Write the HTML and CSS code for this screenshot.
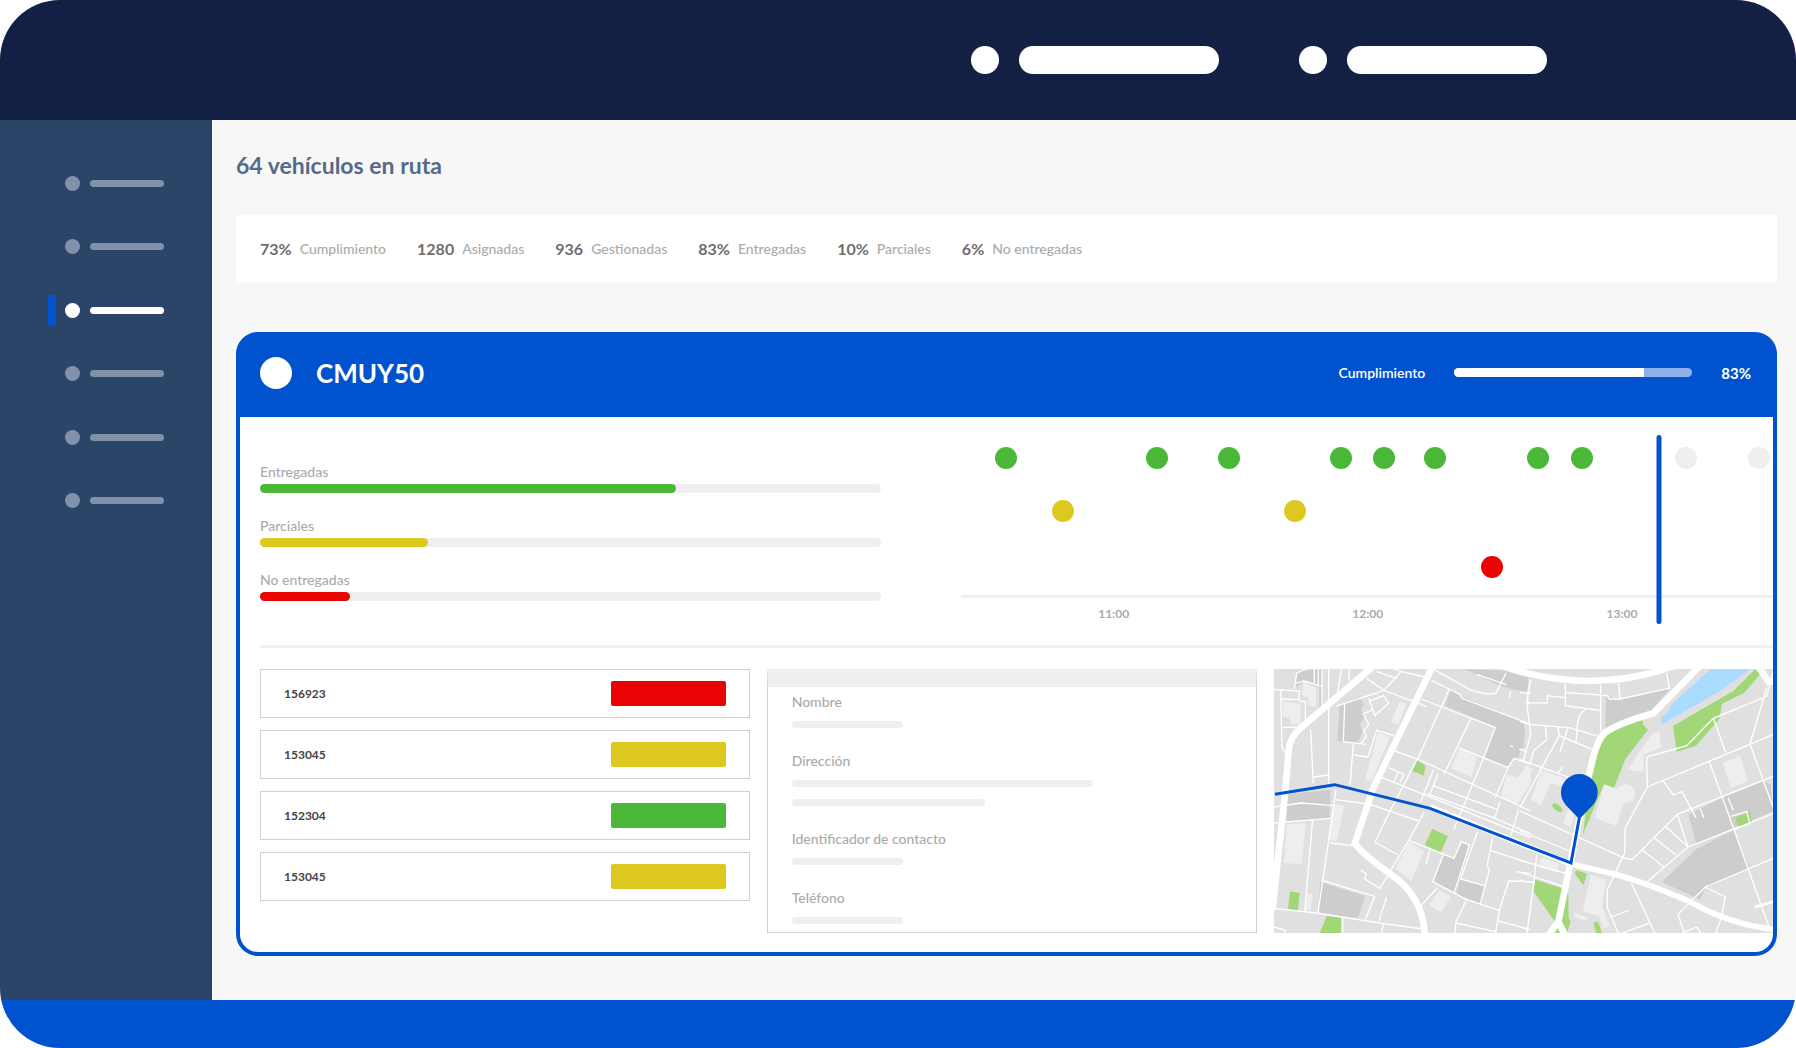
FILE: index.html
```html
<!DOCTYPE html>
<html lang="es">
<head>
<meta charset="utf-8">
<meta name="viewport" content="width=device-width, initial-scale=1">
<title>64 vehículos en ruta</title>
<link rel="stylesheet" href="styles.css">
</head>
<body>
<div class="app">
  <header class="topbar">
    <a class="topbar-link" href="#" aria-label="Cuenta"><span class="topbar-dot"></span><span class="topbar-bar"></span></a>
    <a class="topbar-link" href="#" aria-label="Ajustes"><span class="topbar-dot"></span><span class="topbar-bar"></span></a>
  </header>

  <div class="shell">
    <nav class="sidebar" aria-label="Principal">
      <a class="nav-item" href="#" aria-label="Inicio"><span class="nav-dot"></span><span class="nav-bar"></span></a>
      <a class="nav-item" href="#" aria-label="Pedidos"><span class="nav-dot"></span><span class="nav-bar"></span></a>
      <a class="nav-item active" href="#" aria-label="Rutas" aria-current="page"><span class="nav-dot"></span><span class="nav-bar"></span></a>
      <a class="nav-item" href="#" aria-label="Vehículos"><span class="nav-dot"></span><span class="nav-bar"></span></a>
      <a class="nav-item" href="#" aria-label="Reportes"><span class="nav-dot"></span><span class="nav-bar"></span></a>
      <a class="nav-item" href="#" aria-label="Configuración"><span class="nav-dot"></span><span class="nav-bar"></span></a>
    </nav>

    <main class="content">
      <h1 class="title">64 vehículos en ruta</h1>

      <ul class="stats">
        <li class="stat"><strong>73%</strong><span>Cumplimiento</span></li>
        <li class="stat"><strong>1280</strong><span>Asignadas</span></li>
        <li class="stat"><strong>936</strong><span>Gestionadas</span></li>
        <li class="stat"><strong>83%</strong><span>Entregadas</span></li>
        <li class="stat"><strong>10%</strong><span>Parciales</span></li>
        <li class="stat"><strong>6%</strong><span>No entregadas</span></li>
      </ul>

      <section class="card">
        <header class="card-head">
          <span class="avatar"></span>
          <h2 class="plate">CMUY50</h2>
          <span class="head-label">Cumplimiento</span>
          <div class="head-track"><div class="head-fill" style="width:79.5%"></div></div>
          <span class="head-value">83%</span>
        </header>

        <div class="card-body">
          <div class="overview">
            <div class="progress-list">
              <div class="progress"><span class="label">Entregadas</span><div class="track"><div class="fill green" style="width:67%"></div></div></div>
              <div class="progress"><span class="label">Parciales</span><div class="track"><div class="fill yellow" style="width:27%"></div></div></div>
              <div class="progress"><span class="label">No entregadas</span><div class="track"><div class="fill red" style="width:14.5%"></div></div></div>
            </div>

            <div class="timeline">
              <i class="dot lane-1 green" style="left:5.5%"></i>
              <i class="dot lane-1 green" style="left:24.1%"></i>
              <i class="dot lane-1 green" style="left:33%"></i>
              <i class="dot lane-1 green" style="left:46.8%"></i>
              <i class="dot lane-1 green" style="left:52.1%"></i>
              <i class="dot lane-1 green" style="left:58.4%"></i>
              <i class="dot lane-1 green" style="left:71.1%"></i>
              <i class="dot lane-1 green" style="left:76.5%"></i>
              <i class="dot lane-1 pending" style="left:89.3%"></i>
              <i class="dot lane-1 pending" style="left:98.3%"></i>
              <i class="dot lane-2 yellow" style="left:12.5%"></i>
              <i class="dot lane-2 yellow" style="left:41.1%"></i>
              <i class="dot lane-3 red" style="left:65.4%"></i>
              <div class="axis"></div>
              <span class="hour" style="left:18.8%">11:00</span>
              <span class="hour" style="left:50.1%">12:00</span>
              <span class="hour" style="left:81.4%">13:00</span>
              <div class="now" style="left:86%"></div>
            </div>
          </div>

          <div class="divider"></div>

          <div class="details">
            <ul class="orders">
              <li class="order"><span>156923</span><span class="badge red"></span></li>
              <li class="order"><span>153045</span><span class="badge yellow"></span></li>
              <li class="order"><span>152304</span><span class="badge green"></span></li>
              <li class="order"><span>153045</span><span class="badge yellow"></span></li>
            </ul>

            <dl class="contact">
              <div class="field"><dt>Nombre</dt><dd><span class="line short"></span></dd></div>
              <div class="field"><dt>Dirección</dt><dd><span class="line long"></span><span class="line medium"></span></dd></div>
              <div class="field"><dt>Identificador de contacto</dt><dd><span class="line short"></span></dd></div>
              <div class="field"><dt>Teléfono</dt><dd><span class="line short"></span></dd></div>
            </dl>

            <svg class="map" viewBox="0 0 1497 792" preserveAspectRatio="xMinYMin slice" role="img" aria-label="Mapa de la ruta">
              <rect class="land" width="1497" height="792"/>

              <!-- west side -->
              <g transform="translate(-42 -54)">
                <g class="block">
                  <path d="M110 62L186 54 188 172 178 168 178 104 134 90 104 112Z"/>
                  <path d="M238 160L300 138 310 160 303 180 318 192 300 220 308 245 292 275 233 270Z"/>
                  <path d="M82 430L212 416 208 502 80 510Z"/>
                  <path d="M180 692L316 736 294 802 176 786Z"/>
                  <path d="M612 54L735 60 803 80 803 124 722 106 650 70Z"/>
                  <path d="M572 118L600 134 790 212 796 250 775 320 760 322 742 350 672 318 706 228 556 164Z"/>
                  <path d="M550 612L582 622 604 574 628 582 585 728 520 692Z"/>
                  <path d="M602 684L672 704 660 756 588 730Z"/>
                </g>
                <g class="building">
                  <path d="M130 92L168 110 168 168 146 166 144 138 126 132Z"/>
                  <path d="M68 150L122 160 122 218 94 218 88 200 68 196Z"/>
                  <path d="M354 244L390 258 334 392 315 386Z"/>
                  <path d="M420 152L440 158 414 222 392 212Z"/>
                  <path d="M80 520L137 517 125 640 72 636Z"/>
                  <path d="M220 460L252 462 230 572 204 568Z"/>
                  <path d="M597 290L652 318 634 378 574 354Z"/>
                  <path d="M740 370L775 382 802 344 812 350 812 400 770 462 722 440Z"/>
                  <path d="M446 572L492 600 454 690 406 654Z"/>
                  <path d="M538 718L572 738 542 784 508 762Z"/>
                  <path d="M140 726L158 730 152 778 134 776Z"/>
                </g>
                <g class="park">
                  <path d="M470 326L496 344 492 374 455 360Z"/>
                  <path d="M517 533L564 556 542 604 494 582Z"/>
                  <path d="M90 721L119 726 114 778 84 774Z"/>
                  <path d="M200 795L243 800 243 850 178 850Z"/>
                </g>
                <g class="street">
                  <path d="M42 115L118 120 118 146 62 144M62 118L66 290 76 306M66 229L136 229 136 152 118 150"/>
                  <path d="M104 112L110 66 140 54M104 98L132 90 186 106M163 54L163 96M175 54L175 100M186 54L186 170M206 54L206 400"/>
                  <path d="M152 236L160 398M160 378L206 372M245 54L230 140M267 54L267 90M230 165L372 118 500 166"/>
                  <path d="M320 82L372 118 425 60M350 62L410 82M390 50L425 62 495 78"/>
                  <path d="M326 140L345 194 386 156 370 134 326 152M254 160L250 272 318 280M340 176L310 188 326 220 312 238 318 256 302 280"/>
                  <path d="M280 280L270 402M280 312L324 318 350 238 402 254"/>
                  <path d="M514 88L568 114 545 165 472 326M484 144L706 230 672 318 606 476 582 534M568 114L600 130 606 142 812 220"/>
                  <path d="M522 56L630 116Q680 134 708 126L738 66M650 70L812 126M752 120L748 142M803 90L803 152 812 160"/>
                  <path d="M632 204L552 370M596 290L744 350 706 440M744 350L762 322 812 340M750 284L798 300"/>
                  <path d="M405 300L472 324 812 480M472 324L388 484 345 574 414 612M386 350L432 370 420 394M414 366L402 392M366 380L812 560"/>
                  <path d="M520 358L482 452M534 368L510 430M520 404L712 476M720 452L704 502M776 474L752 556M500 428L700 500 812 548"/>
                  <path d="M42 468L122 456 222 464M42 516L212 502M228 416L174 786M158 506L134 782M228 446L330 460 476 510"/>
                  <path d="M210 576L284 584M492 484L446 568 582 622 604 572 628 582 582 728M446 568L360 712 314 684 318 668 302 656"/>
                  <path d="M192 690L344 736 316 806M380 738L356 812M42 772L170 786 370 818 490 834M370 818L364 850M248 802L248 850M42 828L76 838 76 850"/>
                  <path d="M510 596L498 640M550 612L518 692 620 746 718 778M532 710L484 764M652 542L602 684 672 704M698 560L682 640 688 660 660 760"/>
                  <path d="M692 598L812 638M768 662L812 668M812 692L746 690 718 778 706 850M620 746L588 812 584 850M588 816L706 842M714 810L812 836"/>
                </g>
              </g>

              <!-- east side -->
              <g transform="translate(738 -54)">
                <g class="block">
                  <path d="M-40 70L26 88 22 124-40 110ZM-20 212L8 222Q16 250 10 290L-20 300Z"/>
                  <path d="M258 135L300 146 450 112 384 190Q300 208 256 238Z"/>
                  <path d="M505 490L612 438 728 390 752 400 760 480 640 530 528 578Z"/>
                  <path d="M530 594L640 538 690 652 556 712 540 746 426 692Z"/>
                </g>
                <g class="building">
                  <path d="M64 358L150 388 148 410 92 396 64 462 32 446Z"/>
                  <path d="M18 344L38 352 0 428-20 400Z"/>
                  <path d="M145 470L168 480 152 528 130 516Z"/>
                  <path d="M395 250L418 240 423 290 372 310 370 362 323 356Z"/>
                  <path d="M252 400L300 418 345 440 310 458 290 524 224 502Z"/>
                  <circle cx="317" cy="428" r="29"/>
                  <path d="M608 336L660 314 685 390 632 410Z"/>
                  <path d="M212 672L260 686 246 766 270 826 250 832 236 796 188 780Z"/>
                  <path d="M64 618L118 640 112 664 58 650ZM164 784L204 800 200 810 162 798Z"/>
                </g>
                <g class="park">
                  <path d="M255 250Q300 220 368 208L370 222 384 236 316 324 282 410 252 400 188 552 200 470 215 370Q230 280 255 250Z"/>
                  <path d="M459 225L640 120 706 54 722 68 672 126 606 158 598 204 528 284 470 302Z"/>
                  <path d="M646 500L690 484 697 514 658 534Z"/>
                  <path d="M168 658L201 668 190 703 164 668Z"/>
                  <path d="M46 686L126 712 144 690 146 800 152 812 140 850 100 850 112 822 40 720Z"/>
                  <path d="M220 816L234 812 247 850 230 850Z"/>
                  <ellipse cx="112" cy="470" rx="18" ry="9" transform="rotate(38 112 470)"/>
                </g>
                <path class="water" d="M572 54H692L600 120 423 223V198L442 188 455 160Z"/>
                <g class="street">
                  <path d="M32 86L20 154 32 250 10 330M20 155L82 156 82 134 136 140 136 98M0 124L22 126M136 124L262 134 268 144 300 144 448 112 440 66M296 96L300 142M136 140L136 164 240 178M242 102L242 240"/>
                  <path d="M0 212L28 220 148 230 248 260M76 226L80 266 42 298 30 336M114 226L118 254 218 296M144 230L120 302M196 176Q176 186 172 220L168 276M118 254L0 470M0 326L150 380M128 348L114 366M0 294L20 302"/>
                  <path d="M0 480L310 620 336 626 472 490 760 376M0 540L150 600M382 692L504 588 760 488M366 596L432 648M402 560L468 612M436 526L504 588M472 490L504 588"/>
                  <path d="M380 318L500 284 580 202 740 136 760 60M380 318L382 408 316 530 314 606 262 716 262 770 296 850M382 408L690 280 760 250M430 390L460 432 486 422 528 500M540 472L552 500"/>
                  <path d="M580 202L618 306M740 110L690 280 760 470M568 332L640 530 748 830M624 440L640 478M632 496L680 482 690 518 644 536"/>
                  <path d="M760 622L556 708 474 790 494 850M556 708L616 738 604 800 586 850M480 850L530 828 546 850M334 696L406 850M326 778L274 798M390 816L296 850"/>
                  <path d="M0 628L140 668M0 664L130 706M0 690L42 694M50 610L42 694 20 850M0 828L20 834"/>
                </g>
                <path class="lane" d="M704 768L760 752"/>
              </g>

              <g class="avenue" transform="translate(-42 -54)">
                <path d="M340 46L120 232Q88 262 86 300L73 450 54 620 38 776"/>
                <path d="M518 46L340 410 284 578Q320 620 390 668Q495 740 494 860"/>
              </g>
              <g class="avenue" transform="translate(738 -54)">
                <path d="M-60 42Q210 138 470 42"/>
                <path d="M540 44L400 187Q300 215 255 245Q235 265 222 310L205 380 178 505 150 640 115 812 76 866M115 812L142 866"/>
                <path d="M-270 468L155 640 280 668Q380 695 510 752Q640 826 780 836" class="boulevard"/>
                <path d="M710 40L746 92 780 88"/>
                <path class="route" d="M-735 430L-556 401-270 472 153 636 178 500"/>
                <path class="pin" d="M178 505L138 463Q123 446 123 424A55 55 0 0 1 233 424Q233 446 218 463Z"/>
              </g>
            </svg>
          </div>
        </div>
      </section>
    </main>
  </div>

  <footer class="footer"></footer>
</div>
</body>
</html>
```
FILE: styles.css
```css
* { box-sizing: border-box; }

:root {
  --navy: #132044;
  --slate: #2b4569;
  --blue: #0052ce;
  --green: #4cb83a;
  --yellow: #ddc81f;
  --red: #ea0303;
  --soft: #efefef;
  --muted: #ababab;
}

body {
  margin: 0;
  background: #fff;
  font-family: Lato, "Open Sans", sans-serif;
  font-size: 14px;
  line-height: 20px;
  font-weight: 500;
}

h1, h2, ul, dl, dd { margin: 0; padding: 0; }
ul { list-style: none; }

.green { background: var(--green); }
.yellow { background: var(--yellow); }
.red { background: var(--red); }
.pending { background: var(--soft); }

.app {
  display: flex;
  flex-direction: column;
  min-height: 100vh;
  border-radius: 60px;
  overflow: hidden;
}

/* top bar */
.topbar {
  display: flex;
  justify-content: flex-end;
  align-items: center;
  gap: 80px;
  height: 120px;
  padding-right: 249px;
  background: var(--navy);
}
.topbar-link { display: flex; gap: 20px; }
.topbar-dot { width: 28px; height: 28px; border-radius: 14px; background: #fff; }
.topbar-bar { width: 200px; height: 28px; border-radius: 14px; background: #fff; }

.shell { display: flex; flex: 1; }

/* sidebar */
.sidebar {
  display: flex;
  flex-direction: column;
  flex: none;
  width: 212px;
  padding: 48px 48px 0;
  background: var(--slate);
}
.nav-item {
  display: flex;
  align-items: center;
  gap: 10px;
  height: 31px;
  margin-bottom: 32px;
  border-left: 8px solid transparent;
  padding-left: 9px;
}
.nav-item:nth-child(even) { margin-bottom: 33px; }
.nav-dot { width: 15px; height: 15px; border-radius: 8px; background: #8291aa; }
.nav-bar { width: 74px; height: 7px; border-radius: 4px; background: #8291aa; }
.active { border-color: var(--blue); }
.active .nav-dot, .active .nav-bar { background: #fff; }

/* content */
.content {
  flex: 1;
  min-width: 0;
  padding: 29px 19px 44px 24px;
  background: #f7f7f7;
}
.title {
  margin-bottom: 34px;
  color: #546a8b;
  font-size: 23px;
  line-height: 32px;
  font-weight: 700;
}
.stats {
  display: flex;
  align-items: center;
  gap: 31px;
  height: 68px;
  margin-bottom: 49px;
  padding: 0 24px;
  background: #fff;
}
.stat { display: flex; align-items: center; gap: 8px; color: var(--muted); }
.stat strong { color: #6e6e6e; font-size: 16px; font-weight: 700; }

/* vehicle card */
.card {
  padding: 4px;
  border-radius: 22px;
  background: var(--blue);
}
.card-head {
  display: flex;
  align-items: center;
  height: 81px;
  padding: 0 22px 8px 20px;
  color: #fff;
}
.avatar { width: 32px; height: 32px; border-radius: 16px; background: #fff; }
.plate {
  flex: 1;
  margin-left: 24px;
  font-size: 26px;
  line-height: 32px;
  font-weight: 700;
}
.head-label { font-weight: 600; }
.head-track {
  width: 238px;
  height: 9px;
  margin: 0 29px;
  border-radius: 5px;
  overflow: hidden;
  background: #8fb1ea;
}
.head-fill { height: 9px; background: #fff; }
.head-value { font-size: 15px; font-weight: 700; }

.card-body {
  border-radius: 0 0 18px 18px;
  background: #fff;
}

.overview {
  display: grid;
  grid-template-columns: 621fr 812fr;
  gap: 80px;
  padding-left: 20px;
}
.progress-list { display: grid; align-content: start; gap: 23px; padding-top: 45px; }
.progress { display: grid; gap: 2px; }
.label { color: var(--muted); }
.track { height: 9px; border-radius: 5px; background: var(--soft); }
.fill { height: 9px; border-radius: 5px; }

.timeline { position: relative; height: 228px; }
.dot {
  position: absolute;
  width: 22px;
  height: 22px;
  border-radius: 11px;
  transform: translateX(-50%);
}
.lane-1 { top: 30px; }
.lane-2 { top: 83px; }
.lane-3 { top: 139px; }
.axis { position: absolute; top: 178px; left: 0; right: 0; height: 3px; background: var(--soft); }
.hour {
  position: absolute;
  top: 187px;
  transform: translateX(-50%);
  color: var(--muted);
  font-size: 12px;
  font-weight: 700;
}
.now {
  position: absolute;
  top: 18px;
  width: 5px;
  height: 189px;
  border-radius: 3px;
  background: var(--blue);
  transform: translateX(-50%);
}

.divider { height: 3px; margin-left: 20px; background: #f1f1f1; }

.details {
  display: grid;
  grid-template-columns: 490fr 491fr 499fr;
  gap: 17px;
  padding: 21px 0 19px 20px;
}
.orders { display: grid; align-content: start; gap: 12px; }
.order {
  display: flex;
  align-items: center;
  justify-content: space-between;
  height: 49px;
  padding: 0 23px;
  border: 1px solid #d0d0d0;
  color: #444;
  font-size: 12px;
  font-weight: 700;
}
.badge { width: 115px; height: 25px; border-radius: 2px; }

.contact {
  display: grid;
  align-content: start;
  gap: 23px;
  padding: 5px 24px 7px;
  border: 1px solid #d0d0d0;
  border-top: 18px solid var(--soft);
  color: var(--muted);
}
.field { display: grid; gap: 9px; }
.field dd { display: grid; gap: 12px; }
.line { height: 7px; border-radius: 4px; background: var(--soft); }
.short { width: 111px; }
.medium { width: 193px; }
.long { width: 301px; }

/* map */
.map { display: block; width: 100%; height: 264px; }
.land { fill: #e0e0e0; }
.block { fill: #cdcdcd; }
.building { fill: #eee; }
.park { fill: #a1d777; }
.water { fill: #a9dcff; }
.street { fill: none; stroke: #fff; stroke-width: 4; }
.lane { fill: none; stroke: #fff; stroke-width: 8; }
.avenue { fill: none; stroke: #fff; stroke-width: 20; }
.boulevard { stroke-width: 17; }
.route { stroke: var(--blue); stroke-width: 9; }
.pin { fill: var(--blue); stroke: none; }

.footer { height: 48px; background: var(--blue); }
```
